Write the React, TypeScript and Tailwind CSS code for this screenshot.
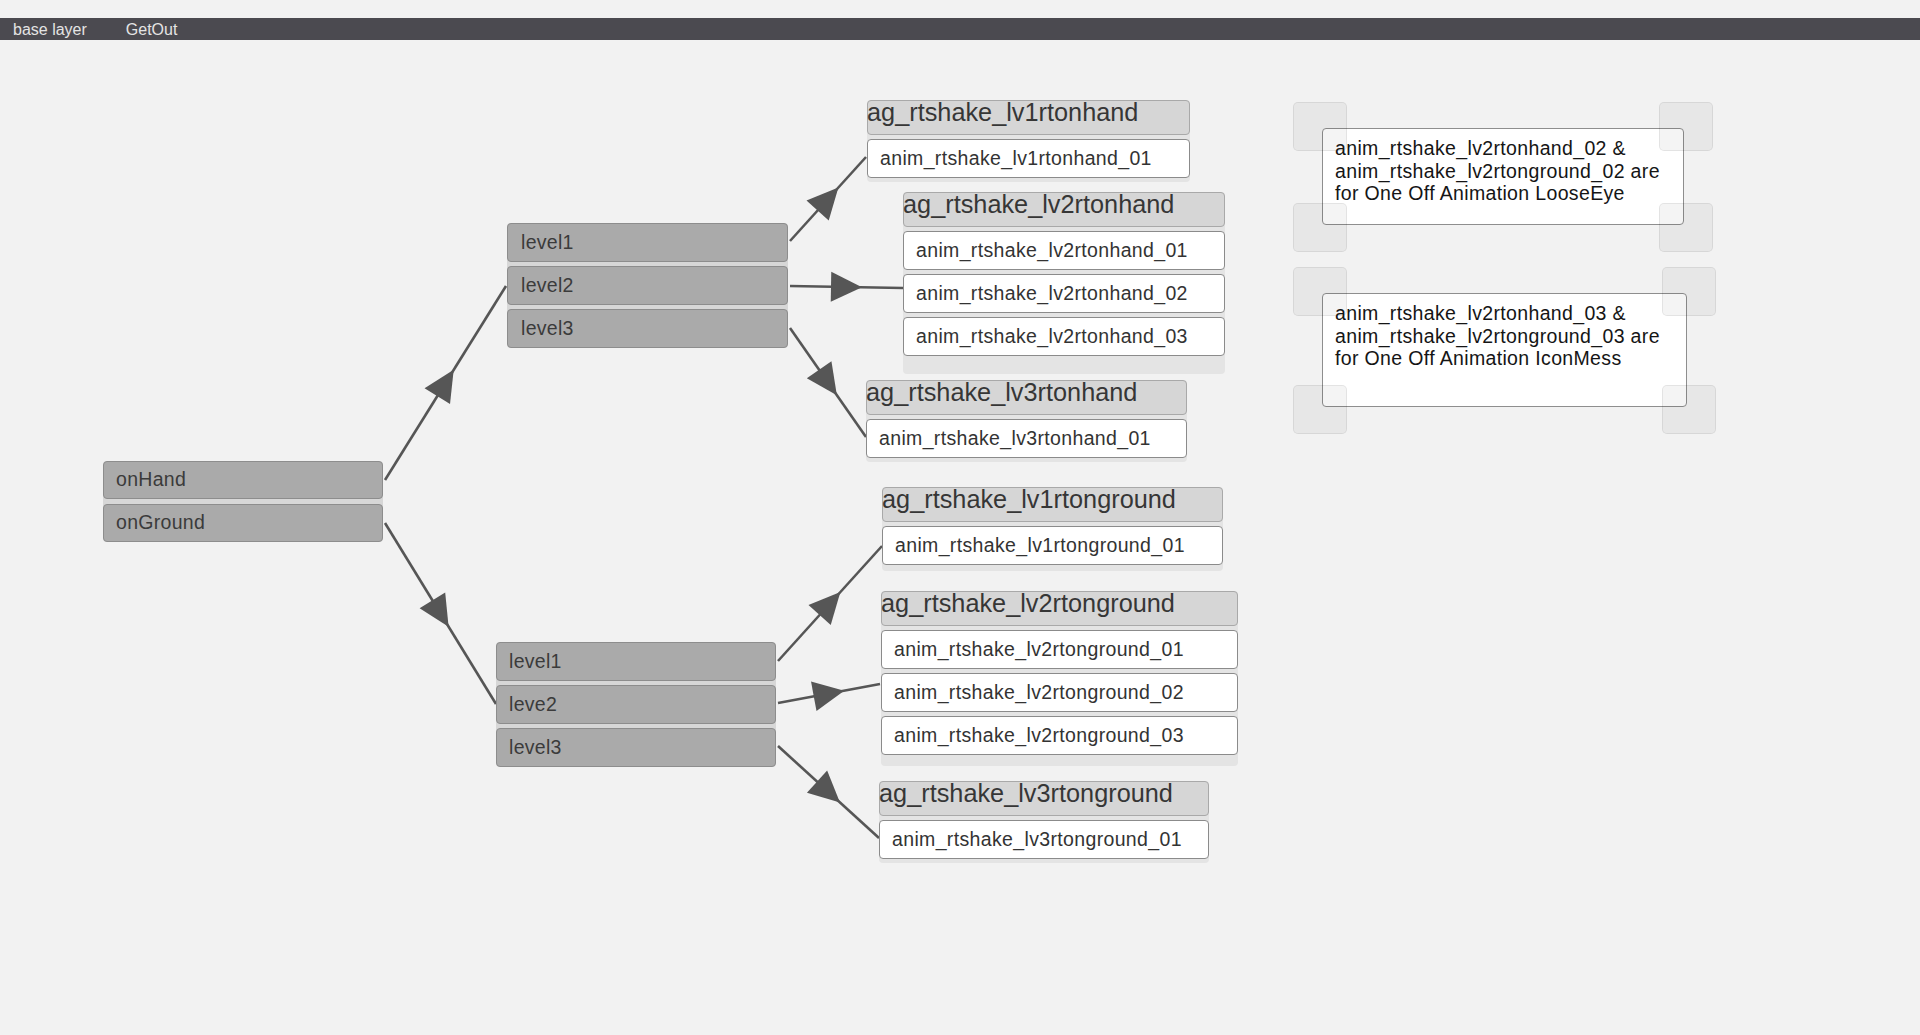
import React from "react";

type Arrow = [number, number, number, number];

const arrows: Arrow[] = [
  [385, 440, 506, 246],
  [385, 483, 496, 664],
  [790, 201, 866, 117],
  [790, 246, 903, 248],
  [790, 288, 866, 397],
  [778, 621, 882, 506],
  [778, 663, 880, 644],
  [778, 706, 879, 798],
];

function Arrows() {
  return (
    <svg className="absolute inset-0 w-full h-full pointer-events-none" width="1920" height="995">
      {arrows.map(([x1, y1, x2, y2], i) => {
        const dx = x2 - x1;
        const dy = y2 - y1;
        const len = Math.sqrt(dx * dx + dy * dy);
        const ux = dx / len;
        const uy = dy / len;
        const mx = (x1 + x2) / 2;
        const my = (y1 + y2) / 2;
        const L = 31;
        const W = 15;
        const tipX = mx + ux * (L / 2);
        const tipY = my + uy * (L / 2);
        const bx = mx - ux * (L / 2);
        const by = my - uy * (L / 2);
        const p1 = `${tipX},${tipY}`;
        const p2 = `${bx - uy * W},${by + ux * W}`;
        const p3 = `${bx + uy * W},${by - ux * W}`;
        return (
          <g key={i}>
            <line x1={x1} y1={y1} x2={x2} y2={y2} stroke="#565656" strokeWidth={2.6} />
            <polygon points={`${p1} ${p2} ${p3}`} fill="#565656" />
          </g>
        );
      })}
    </svg>
  );
}

function LeftGroup({ className, labels, gap, boxH, pad }: { className: string; labels: string[]; gap: string; boxH: string; pad: string }) {
  return (
    <div className={`absolute flex flex-col rounded-[4px] bg-[#d7d7d7] ${gap} ${className}`}>
      {labels.map((l) => (
        <div
          key={l}
          className={`flex items-center rounded-[4px] border border-[#8d8d8d] bg-[#aaaaaa] text-[19.5px] tracking-[0.3px] text-[#3b3b3b] ${boxH} ${pad}`}
        >
          {l}
        </div>
      ))}
    </div>
  );
}

function RightGroup({ className, title, items, footer }: { className: string; title: string; items: string[]; footer: string }) {
  return (
    <div className={`absolute flex flex-col gap-[4px] rounded-[4px] bg-[#e4e4e4] ${className}`}>
      <div className="h-[35px] overflow-visible rounded-[4px] border border-[#a9a9a9] bg-[#d6d6d6]">
        <div className="-ml-[1px] -mt-[3px] whitespace-nowrap text-[25.3px] leading-[29px] text-[#363636]">{title}</div>
      </div>
      {items.map((it) => (
        <div
          key={it}
          className="flex h-[39px] items-center whitespace-nowrap rounded-[4px] border border-[#8b8b8b] bg-white pl-[12px] text-[19.5px] tracking-[0.35px] text-[#333333]"
        >
          {it}
        </div>
      ))}
      <div className={footer} />
    </div>
  );
}

function Handle({ className }: { className: string }) {
  return <div className={`absolute h-[49px] w-[54px] rounded-[5px] border border-black/[0.07] bg-black/[0.045] ${className}`} />;
}

function Note({ className, lines }: { className: string; lines: string[] }) {
  return (
    <div
      className={`absolute flex flex-col rounded-[4px] border border-[#8e8e8e] bg-white px-[12px] pt-[8px] text-[19.5px] leading-[22.5px] tracking-[0.35px] text-[#151515] ${className}`}
    >
      {lines.map((l) => (
        <div key={l} className="whitespace-nowrap">
          {l}
        </div>
      ))}
    </div>
  );
}

export default function App() {
  return (
    <div className="flex h-[1035px] w-[1920px] flex-col overflow-hidden bg-[#f2f2f2] font-['Liberation_Sans',Arial,sans-serif]">
      <div className="h-[18px] shrink-0" />
      <div className="flex h-[22px] shrink-0 items-center bg-[#4b4a50] pl-[13px] pt-[1px] text-[16px] text-[#e4e4e4]">
        <span>base layer</span>
        <span className="ml-[39px]">GetOut</span>
      </div>
      <div className="relative flex-1">
        <Arrows />

        <LeftGroup
          className="left-[103px] top-[421px] w-[280px]"
          labels={["onHand", "onGround"]}
          gap="gap-[5px]"
          boxH="h-[38px]"
          pad="pl-[12px]"
        />
        <LeftGroup
          className="left-[507px] top-[183px] w-[281px]"
          labels={["level1", "level2", "level3"]}
          gap="gap-[4px]"
          boxH="h-[39px]"
          pad="pl-[13px]"
        />
        <LeftGroup
          className="left-[496px] top-[602px] w-[280px]"
          labels={["level1", "leve2", "level3"]}
          gap="gap-[4px]"
          boxH="h-[39px]"
          pad="pl-[12px]"
        />

        <RightGroup
          className="left-[867px] top-[60px] w-[323px]"
          title="ag_rtshake_lv1rtonhand"
          items={["anim_rtshake_lv1rtonhand_01"]}
          footer="h-0"
        />
        <RightGroup
          className="left-[903px] top-[152px] w-[322px]"
          title="ag_rtshake_lv2rtonhand"
          items={["anim_rtshake_lv2rtonhand_01", "anim_rtshake_lv2rtonhand_02", "anim_rtshake_lv2rtonhand_03"]}
          footer="h-[14px]"
        />
        <RightGroup
          className="left-[866px] top-[340px] w-[321px]"
          title="ag_rtshake_lv3rtonhand"
          items={["anim_rtshake_lv3rtonhand_01"]}
          footer="h-0"
        />
        <RightGroup
          className="left-[882px] top-[447px] w-[341px]"
          title="ag_rtshake_lv1rtonground"
          items={["anim_rtshake_lv1rtonground_01"]}
          footer="h-[2px]"
        />
        <RightGroup
          className="left-[881px] top-[551px] w-[357px]"
          title="ag_rtshake_lv2rtonground"
          items={["anim_rtshake_lv2rtonground_01", "anim_rtshake_lv2rtonground_02", "anim_rtshake_lv2rtonground_03"]}
          footer="h-[7px]"
        />
        <RightGroup
          className="left-[879px] top-[741px] w-[330px]"
          title="ag_rtshake_lv3rtonground"
          items={["anim_rtshake_lv3rtonground_01"]}
          footer="h-0"
        />

        <Note
          className="left-[1322px] top-[88px] h-[97px] w-[362px]"
          lines={["anim_rtshake_lv2rtonhand_02 &", "anim_rtshake_lv2rtonground_02 are", "for One Off Animation LooseEye"]}
        />
        <Handle className="left-[1293px] top-[62px]" />
        <Handle className="left-[1659px] top-[62px]" />
        <Handle className="left-[1293px] top-[163px]" />
        <Handle className="left-[1659px] top-[163px]" />

        <Note
          className="left-[1322px] top-[253px] h-[114px] w-[365px]"
          lines={["anim_rtshake_lv2rtonhand_03 &", "anim_rtshake_lv2rtonground_03 are", "for One Off Animation IconMess"]}
        />
        <Handle className="left-[1293px] top-[227px]" />
        <Handle className="left-[1662px] top-[227px]" />
        <Handle className="left-[1293px] top-[345px]" />
        <Handle className="left-[1662px] top-[345px]" />
      </div>
    </div>
  );
}
